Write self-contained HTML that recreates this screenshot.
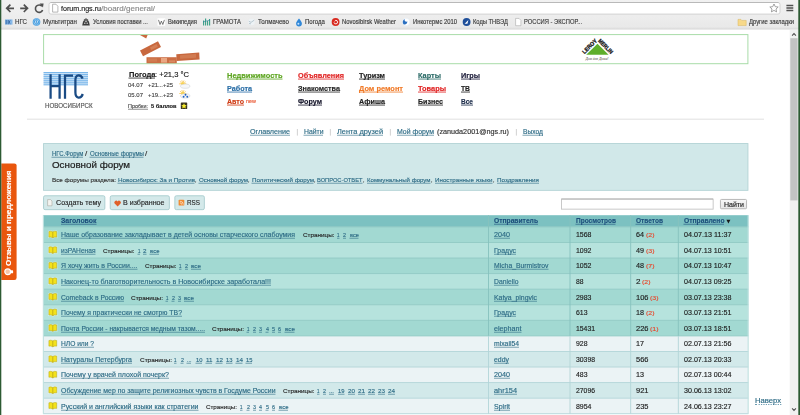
<!DOCTYPE html>
<html><head><meta charset="utf-8"><title>Основной форум</title><style>
html,body{margin:0;padding:0;}
body{width:800px;height:415px;overflow:hidden;background:#fff;position:relative;font-family:'Liberation Sans',sans-serif;}
.t{position:absolute;white-space:nowrap;line-height:1;transform-origin:0 0;font-family:'Liberation Sans',sans-serif;-webkit-text-stroke:0.022em currentColor;}
#bg{position:absolute;left:0;top:0;}
#tx{position:absolute;left:0;top:0;width:800px;height:415px;will-change:transform;}
</style></head><body>
<svg id="bg" width="800" height="415" viewBox="0 0 800 415">
<defs>
<linearGradient id="gtb" x1="0" y1="0" x2="0" y2="1"><stop offset="0" stop-color="#f1f1f1"/><stop offset="0.45" stop-color="#eeeeee"/><stop offset="0.9" stop-color="#e9e9e9"/><stop offset="0.96" stop-color="#dcdcdc"/><stop offset="1" stop-color="#f2f2f2"/></linearGradient>
<linearGradient id="gbtn" x1="0" y1="0" x2="0" y2="1"><stop offset="0" stop-color="#f8f8f8"/><stop offset="1" stop-color="#e5e5e5"/></linearGradient>
<pattern id="stripes" x="0" y="72" width="10" height="1.95" patternUnits="userSpaceOnUse"><rect width="10" height="1.95" fill="#d3e7f8"/><rect width="10" height="1.05" fill="#79b6ea"/></pattern>
</defs>
<rect x="0.00" y="0.00" width="800.00" height="30.00" fill="url(#gtb)" rx="0" />
<rect x="49.00" y="2.50" width="731.00" height="11.60" fill="#fff" stroke="#d2d2d2" stroke-width="1" rx="2" />
<path d="M50.5 2.5H778.5" stroke="#b9b9b9" stroke-width="1"/>
<g fill="none" stroke="#505050" stroke-width="1.7" stroke-linecap="butt" stroke-linejoin="miter">
<path d="M14 8.3H7M10.4 4.6L6.7 8.3L10.4 12"/>
<path d="M20.2 8.3H27.2M23.8 4.6L27.5 8.3L23.8 12"/>
<path d="M41.9 6.2A3.7 3.7 0 1 0 42.6 10" stroke-width="1.6"/>
</g>
<path d="M39.6 3.4L43.6 3.6L43 7.6Z" fill="#505050"/>
<path d="M52.6 4.2h3.3l2 2v5.9h-5.3z" fill="#fff" stroke="#9a9a9a" stroke-width="0.7"/>
<path d="M774 4l1.3 2.7 2.9.3-2.2 2 .6 2.9-2.6-1.5-2.6 1.5.6-2.9-2.2-2 2.9-.3z" fill="#fff" stroke="#8c8c8c" stroke-width="0.8"/>
<g stroke="#505050" stroke-width="1.4"><path d="M786.4 5.5h6.9M786.4 8h6.9M786.4 10.5h6.9"/></g>
<rect x="5" y="19.4" width="7.5" height="5.2" fill="#86b8e8"/><path d="M6.2 20v4.2M8.2 20v4.2M10.4 20.4c-1.4 0-1.4 3.4 0 3.4" stroke="#2a5a98" stroke-width="0.8" fill="none"/>
<circle cx="36.5" cy="22" r="3.8" fill="#3a96dc"/><circle cx="36.5" cy="22" r="2.9" fill="none" stroke="#bfe0f8" stroke-width="0.5"/><path d="M34.9 23.7l1.2-3.5M36.8 23.7l1.2-3.5" stroke="#fff" stroke-width="0.7"/>
<path d="M82.2 25.4l.8-3.6 1.6-2.6 1.4-.9 1.4.9 1.6 2.6.8 3.6z" fill="#3c3c3c"/><circle cx="86" cy="20.4" r="1.5" fill="#6e6e6e"/><circle cx="84.8" cy="23.2" r=".7" fill="#ddd"/><circle cx="87.2" cy="23.2" r=".7" fill="#ddd"/><circle cx="86" cy="21.6" r=".6" fill="#eee"/>
<rect x="157.5" y="18.3" width="7.8" height="7.4" fill="#fff"/><path d="M158.5 19.9l1.5 4.6 1.4-3.4 1.4 3.4 1.6-4.6" stroke="#444" stroke-width="0.7" fill="none"/>
<path d="M203.6 25.5v-5M205.6 25.5v-7M207.6 25.5v-4.5M209.6 25.5v-6.5" stroke="#3aa085" stroke-width="1.1"/><path d="M203 22l7-2" stroke="#2a7a98" stroke-width="0.6"/>
<circle cx="251.5" cy="22" r="3.3" fill="#edf2f5"/><path d="M248.8 21.2l2.2 1.2 3.2-2.2M249 23.5l2 .3" stroke="#a2b4c0" stroke-width="0.7" fill="none"/>
<path d="M299 18.4c1.9 2.4 2.9 3.6 2.9 5.1a2.9 2.9 0 0 1-5.8 0c0-1.5 1-2.7 2.9-5.1z" fill="#3188d8"/><circle cx="298.4" cy="23.8" r="1" fill="#c4e2ff"/>
<circle cx="335.6" cy="22" r="3.9" fill="#d82a20"/><path d="M334 22.4a1.8 1.8 0 1 0 1.8-2.1l-1.2 1" stroke="#fff" stroke-width="0.9" fill="none"/>
<circle cx="406" cy="22" r="3.8" fill="#fff" stroke="#dfe8f2" stroke-width="0.5"/><path d="M403.8 24.4a3.2 3.2 0 0 1 1-5.4c-.8 1.6.2 2.9 2.6 2.6a3.2 3.2 0 0 1-3.6 2.8z" fill="#2a6fc0"/>
<circle cx="466.6" cy="22" r="3.9" fill="#1f4f9a"/><path d="M464.6 23.8l3.8-3.8-1 3.8z" fill="#fff"/>
<path d="M515.6 18.4h3.4l1.9 1.9v5.4h-5.3z" fill="#fff" stroke="#aaa" stroke-width="0.6"/>
<path d="M738 19.4h2.9l.8 1h4.5v5.2h-8.2z" fill="#f7d98a" stroke="#d9b45a" stroke-width="0.5"/>
<rect x="789.70" y="30.00" width="8.50" height="385.00" fill="#f1f1f1" rx="0" />
<rect x="790.30" y="38.20" width="7.30" height="162.20" fill="#c3c3c3" rx="0" />
<path d="M792.1 35.6L794 33.6L795.9 35.6" stroke="#505050" stroke-width="1.1" fill="none"/><path d="M792.1 408.4L794 410.4L795.9 408.4" stroke="#505050" stroke-width="1.1" fill="none"/>
<rect x="43.60" y="34.60" width="704.30" height="29.10" fill="#fff" stroke="#a8dca8" stroke-width="1" rx="0" />
<path d="M140 35h7.6l-1.4 3.6z" fill="#c96a3e"/>
<path d="M140 50.4L158 41.2L161 47L143 56.2z" fill="#c8683e"/><path d="M150 47.4l6.5-3.3 1.4 2.7-6.5 3.3z" fill="#d9895f" opacity=".7"/>
<path d="M146.5 57.2h30.3v6h-30.3z" fill="#cb6e44"/>
<rect x="161" y="58" width="6" height="4.6" fill="#eaa782"/><rect x="169" y="60.4" width="6" height="2" fill="#dd9068" opacity=".8"/><rect x="148" y="58.4" width="9" height="3.4" fill="#d88a5e" opacity=".5"/>
<path d="M176.3 54.2L199.2 52.6L199.6 59.4L176.7 61z" fill="#c8683e"/><path d="M180 55.2l16-1.1.2 3.6-16 1.1z" fill="#d98b61" opacity=".55"/>
<path d="M597.5 43.7L608.6 54.8H586.2z" fill="#5fae2b"/>
<g font-family="'Liberation Sans',sans-serif" font-weight="bold" font-size="5.7" fill="#141414" stroke="#141414" stroke-width="0.3">
<text transform="translate(584.4 54.2) rotate(-45)" textLength="18.4" lengthAdjust="spacingAndGlyphs">LEROY</text>
<text transform="translate(597.7 41.2) rotate(45)" textLength="18.4" lengthAdjust="spacingAndGlyphs">MERLIN</text></g>
<text x="585.5" y="59.6" font-family="'Liberation Serif',serif" font-style="italic" font-size="4.6" fill="#4a3a34" textLength="23" lengthAdjust="spacingAndGlyphs">Дом для Дома!</text>
<rect x="43.50" y="72.00" width="44.50" height="13.60" fill="url(#stripes)" rx="0" />
<g stroke="#1a4b84" stroke-width="2.25" fill="none">
<path d="M50.6 74.3V98.8M59.6 74.3V98.8M50.6 86H59.6" />
<path d="M65 98.8V75.5H73"/>
<path d="M82.6 78.6C81 74 75.4 74 75.4 80V92.6C75.4 99 81 99 82.8 94"/>
</g>
<path d="M180.90 83.80L179.30 83.80M181.34 82.58L180.11 81.56M182.31 81.96L181.89 80.41M183.45 82.01L183.99 80.51M184.36 82.72L185.67 81.80M184.70 83.80L186.30 83.80" stroke="#f7c55a" stroke-width="0.9" fill="none"/><circle cx="182.8" cy="83.8" r="1.9" fill="#f9d24e"/>
<ellipse cx="185.2" cy="86.2" rx="4.7" ry="2.1" fill="#f6f7f9" stroke="#c4c8cc" stroke-width="0.5"/>
<path d="M180.90 93.50L179.30 93.50M181.34 92.28L180.11 91.26M182.31 91.66L181.89 90.11M183.45 91.71L183.99 90.21M184.36 92.42L185.67 91.50M184.70 93.50L186.30 93.50" stroke="#f7c55a" stroke-width="0.9" fill="none"/><circle cx="182.8" cy="93.5" r="1.9" fill="#f9d24e"/>
<ellipse cx="185.2" cy="95.9" rx="4.7" ry="2.2" fill="#f6f7f9" stroke="#c4c8cc" stroke-width="0.5"/>
<circle cx="183.6" cy="96.8" r="0.95" fill="#1f5fc0"/><circle cx="185.5" cy="94.8" r="0.95" fill="#1f5fc0"/><circle cx="187.3" cy="96.8" r="0.95" fill="#1f5fc0"/>
<rect x="180.8" y="102.4" width="6.4" height="6.7" rx="0.7" fill="#3a3422"/><path d="M184 103.2l.9 1.7 1.8.3-1.3 1.3.4 1.9-1.8-.9-1.8.9.4-1.9-1.3-1.3 1.8-.3z" fill="#f6ec2e"/>
<rect x="27.00" y="118.70" width="737.00" height="0.90" fill="#dcdcdc" rx="0" />
<rect x="296.90" y="129.00" width="0.80" height="6.60" fill="#c6c6c6" rx="0" />
<rect x="329.90" y="129.00" width="0.80" height="6.60" fill="#c6c6c6" rx="0" />
<rect x="389.90" y="129.00" width="0.80" height="6.60" fill="#c6c6c6" rx="0" />
<rect x="515.90" y="129.00" width="0.80" height="6.60" fill="#c6c6c6" rx="0" />
<rect x="43.55" y="143.55" width="704.40" height="46.80" fill="#d1e8e9" stroke="#b3d3d5" stroke-width="0.9" rx="0" />
<rect x="43.55" y="195.75" width="61.30" height="13.90" fill="#d4e9ea" stroke="#a7ccce" stroke-width="0.9" rx="1.5" />
<rect x="110.25" y="195.75" width="59.10" height="13.90" fill="#d4e9ea" stroke="#a7ccce" stroke-width="0.9" rx="1.5" />
<rect x="174.85" y="195.75" width="29.50" height="13.90" fill="#d4e9ea" stroke="#a7ccce" stroke-width="0.9" rx="1.5" />
<path d="M47.6 199.6h3l1.4 1.4v4.8h-4.4z" fill="#f4f4f0" stroke="#a8a8a0" stroke-width="0.6"/>
<path d="M117.6 206.4l-3-3a1.75 1.75 0 0 1 3-2a1.75 1.75 0 0 1 3 2z" fill="#e0602a"/>
<rect x="178.6" y="199.7" width="5.7" height="5.9" rx="0.9" fill="#f08a30"/><path d="M179.9 202.8a1.8 1.8 0 0 1 1.8 1.8M179.9 201.2a3.4 3.4 0 0 1 3.4 3.4" stroke="#fff" stroke-width="0.6" fill="none"/>
<rect x="561.45" y="199.05" width="151.70" height="10.10" fill="#fff" stroke="#c4c4c4" stroke-width="0.9" rx="0" />
<path d="M561.5 199H713" stroke="#a8a8a8" stroke-width="0.8"/>
<rect x="720.45" y="199.45" width="26.10" height="9.30" fill="url(#gbtn)" stroke="#b0b0b0" stroke-width="0.9" rx="1" />
<rect x="43.10" y="215.20" width="705.30" height="11.70" fill="#7cc1c1" rx="0" />
<rect x="43.10" y="226.90" width="705.30" height="15.62" fill="#a2d9d2" rx="0" />
<rect x="43.10" y="242.47" width="705.30" height="15.62" fill="#b6e3dd" rx="0" />
<rect x="43.10" y="258.04" width="705.30" height="15.62" fill="#a2d9d2" rx="0" />
<rect x="43.10" y="273.61" width="705.30" height="15.62" fill="#b6e3dd" rx="0" />
<rect x="43.10" y="289.18" width="705.30" height="15.62" fill="#a2d9d2" rx="0" />
<rect x="43.10" y="304.75" width="705.30" height="15.62" fill="#b6e3dd" rx="0" />
<rect x="43.10" y="320.32" width="705.30" height="15.62" fill="#a2d9d2" rx="0" />
<rect x="43.10" y="335.89" width="705.30" height="15.62" fill="#ebf3f5" rx="0" />
<rect x="43.10" y="351.46" width="705.30" height="15.62" fill="#d2e9ea" rx="0" />
<rect x="43.10" y="367.03" width="705.30" height="15.62" fill="#ebf3f5" rx="0" />
<rect x="43.10" y="382.60" width="705.30" height="15.62" fill="#d2e9ea" rx="0" />
<rect x="43.10" y="398.17" width="705.30" height="15.62" fill="#ebf3f5" rx="0" />
<rect x="43.10" y="226.45" width="705.30" height="0.90" fill="#8fc9c4" rx="0" />
<rect x="43.10" y="242.02" width="705.30" height="0.90" fill="#8fc9c4" rx="0" />
<rect x="43.10" y="257.59" width="705.30" height="0.90" fill="#8fc9c4" rx="0" />
<rect x="43.10" y="273.16" width="705.30" height="0.90" fill="#8fc9c4" rx="0" />
<rect x="43.10" y="288.73" width="705.30" height="0.90" fill="#8fc9c4" rx="0" />
<rect x="43.10" y="304.30" width="705.30" height="0.90" fill="#8fc9c4" rx="0" />
<rect x="43.10" y="319.87" width="705.30" height="0.90" fill="#8fc9c4" rx="0" />
<rect x="43.10" y="335.44" width="705.30" height="0.90" fill="#8fc9c4" rx="0" />
<rect x="43.10" y="351.01" width="705.30" height="0.90" fill="#b3d5d8" rx="0" />
<rect x="43.10" y="366.58" width="705.30" height="0.90" fill="#b3d5d8" rx="0" />
<rect x="43.10" y="382.15" width="705.30" height="0.90" fill="#b3d5d8" rx="0" />
<rect x="43.10" y="397.72" width="705.30" height="0.90" fill="#b3d5d8" rx="0" />
<rect x="43.10" y="413.29" width="705.30" height="0.90" fill="#b3d5d8" rx="0" />
<rect x="488.05" y="215.20" width="0.90" height="120.69" fill="#86c2be" rx="0" />
<rect x="488.05" y="335.89" width="0.90" height="77.85" fill="#b3d5d8" rx="0" />
<rect x="569.55" y="215.20" width="0.90" height="120.69" fill="#86c2be" rx="0" />
<rect x="569.55" y="335.89" width="0.90" height="77.85" fill="#b3d5d8" rx="0" />
<rect x="630.25" y="215.20" width="0.90" height="120.69" fill="#86c2be" rx="0" />
<rect x="630.25" y="335.89" width="0.90" height="77.85" fill="#b3d5d8" rx="0" />
<rect x="677.85" y="215.20" width="0.90" height="120.69" fill="#86c2be" rx="0" />
<rect x="677.85" y="335.89" width="0.90" height="77.85" fill="#b3d5d8" rx="0" />
<rect x="42.80" y="215.20" width="1.10" height="198.54" fill="#c0e1e0" rx="0" />
<rect x="747.60" y="215.20" width="1.10" height="198.54" fill="#c0e1e0" rx="0" />
<path d="M48.9 231.55q2-.9 3.9 .3q1.9-1.2 3.9-.3v5.6q-2-.6-3.9 .7q-1.9-1.3-3.9-.7z" fill="none" stroke="#e6fbf4" stroke-width="1.7" opacity=".55"/><path d="M48.9 231.55q2-.9 3.9 .3q1.9-1.2 3.9-.3v5.6q-2-.6-3.9 .7q-1.9-1.3-3.9-.7z" fill="#f3e21c" stroke="#b9a216" stroke-width="0.5"/><path d="M52.8 231.95v5.9" stroke="#a08c12" stroke-width="0.55"/>
<path d="M48.9 247.12q2-.9 3.9 .3q1.9-1.2 3.9-.3v5.6q-2-.6-3.9 .7q-1.9-1.3-3.9-.7z" fill="none" stroke="#e6fbf4" stroke-width="1.7" opacity=".55"/><path d="M48.9 247.12q2-.9 3.9 .3q1.9-1.2 3.9-.3v5.6q-2-.6-3.9 .7q-1.9-1.3-3.9-.7z" fill="#f3e21c" stroke="#b9a216" stroke-width="0.5"/><path d="M52.8 247.52v5.9" stroke="#a08c12" stroke-width="0.55"/>
<path d="M48.9 262.69q2-.9 3.9 .3q1.9-1.2 3.9-.3v5.6q-2-.6-3.9 .7q-1.9-1.3-3.9-.7z" fill="none" stroke="#e6fbf4" stroke-width="1.7" opacity=".55"/><path d="M48.9 262.69q2-.9 3.9 .3q1.9-1.2 3.9-.3v5.6q-2-.6-3.9 .7q-1.9-1.3-3.9-.7z" fill="#f3e21c" stroke="#b9a216" stroke-width="0.5"/><path d="M52.8 263.09v5.9" stroke="#a08c12" stroke-width="0.55"/>
<path d="M48.9 278.26q2-.9 3.9 .3q1.9-1.2 3.9-.3v5.6q-2-.6-3.9 .7q-1.9-1.3-3.9-.7z" fill="none" stroke="#e6fbf4" stroke-width="1.7" opacity=".55"/><path d="M48.9 278.26q2-.9 3.9 .3q1.9-1.2 3.9-.3v5.6q-2-.6-3.9 .7q-1.9-1.3-3.9-.7z" fill="#f3e21c" stroke="#b9a216" stroke-width="0.5"/><path d="M52.8 278.66v5.9" stroke="#a08c12" stroke-width="0.55"/>
<path d="M48.9 293.83q2-.9 3.9 .3q1.9-1.2 3.9-.3v5.6q-2-.6-3.9 .7q-1.9-1.3-3.9-.7z" fill="none" stroke="#e6fbf4" stroke-width="1.7" opacity=".55"/><path d="M48.9 293.83q2-.9 3.9 .3q1.9-1.2 3.9-.3v5.6q-2-.6-3.9 .7q-1.9-1.3-3.9-.7z" fill="#f3e21c" stroke="#b9a216" stroke-width="0.5"/><path d="M52.8 294.23v5.9" stroke="#a08c12" stroke-width="0.55"/>
<path d="M48.9 309.40q2-.9 3.9 .3q1.9-1.2 3.9-.3v5.6q-2-.6-3.9 .7q-1.9-1.3-3.9-.7z" fill="none" stroke="#e6fbf4" stroke-width="1.7" opacity=".55"/><path d="M48.9 309.40q2-.9 3.9 .3q1.9-1.2 3.9-.3v5.6q-2-.6-3.9 .7q-1.9-1.3-3.9-.7z" fill="#f3e21c" stroke="#b9a216" stroke-width="0.5"/><path d="M52.8 309.80v5.9" stroke="#a08c12" stroke-width="0.55"/>
<path d="M48.9 324.97q2-.9 3.9 .3q1.9-1.2 3.9-.3v5.6q-2-.6-3.9 .7q-1.9-1.3-3.9-.7z" fill="none" stroke="#e6fbf4" stroke-width="1.7" opacity=".55"/><path d="M48.9 324.97q2-.9 3.9 .3q1.9-1.2 3.9-.3v5.6q-2-.6-3.9 .7q-1.9-1.3-3.9-.7z" fill="#f3e21c" stroke="#b9a216" stroke-width="0.5"/><path d="M52.8 325.37v5.9" stroke="#a08c12" stroke-width="0.55"/>
<path d="M48.9 340.54q2-.9 3.9 .3q1.9-1.2 3.9-.3v5.6q-2-.6-3.9 .7q-1.9-1.3-3.9-.7z" fill="none" stroke="#e6fbf4" stroke-width="1.7" opacity=".55"/><path d="M48.9 340.54q2-.9 3.9 .3q1.9-1.2 3.9-.3v5.6q-2-.6-3.9 .7q-1.9-1.3-3.9-.7z" fill="#f3e21c" stroke="#b9a216" stroke-width="0.5"/><path d="M52.8 340.94v5.9" stroke="#a08c12" stroke-width="0.55"/>
<path d="M48.9 356.11q2-.9 3.9 .3q1.9-1.2 3.9-.3v5.6q-2-.6-3.9 .7q-1.9-1.3-3.9-.7z" fill="none" stroke="#e6fbf4" stroke-width="1.7" opacity=".55"/><path d="M48.9 356.11q2-.9 3.9 .3q1.9-1.2 3.9-.3v5.6q-2-.6-3.9 .7q-1.9-1.3-3.9-.7z" fill="#f3e21c" stroke="#b9a216" stroke-width="0.5"/><path d="M52.8 356.51v5.9" stroke="#a08c12" stroke-width="0.55"/>
<path d="M48.9 371.68q2-.9 3.9 .3q1.9-1.2 3.9-.3v5.6q-2-.6-3.9 .7q-1.9-1.3-3.9-.7z" fill="none" stroke="#e6fbf4" stroke-width="1.7" opacity=".55"/><path d="M48.9 371.68q2-.9 3.9 .3q1.9-1.2 3.9-.3v5.6q-2-.6-3.9 .7q-1.9-1.3-3.9-.7z" fill="#f3e21c" stroke="#b9a216" stroke-width="0.5"/><path d="M52.8 372.08v5.9" stroke="#a08c12" stroke-width="0.55"/>
<path d="M48.9 387.25q2-.9 3.9 .3q1.9-1.2 3.9-.3v5.6q-2-.6-3.9 .7q-1.9-1.3-3.9-.7z" fill="none" stroke="#e6fbf4" stroke-width="1.7" opacity=".55"/><path d="M48.9 387.25q2-.9 3.9 .3q1.9-1.2 3.9-.3v5.6q-2-.6-3.9 .7q-1.9-1.3-3.9-.7z" fill="#f3e21c" stroke="#b9a216" stroke-width="0.5"/><path d="M52.8 387.65v5.9" stroke="#a08c12" stroke-width="0.55"/>
<path d="M48.9 402.82q2-.9 3.9 .3q1.9-1.2 3.9-.3v5.6q-2-.6-3.9 .7q-1.9-1.3-3.9-.7z" fill="none" stroke="#e6fbf4" stroke-width="1.7" opacity=".55"/><path d="M48.9 402.82q2-.9 3.9 .3q1.9-1.2 3.9-.3v5.6q-2-.6-3.9 .7q-1.9-1.3-3.9-.7z" fill="#f3e21c" stroke="#b9a216" stroke-width="0.5"/><path d="M52.8 403.22v5.9" stroke="#a08c12" stroke-width="0.55"/>
<path d="M726.4 219.8h4l-2 3.6z" fill="#1a1a1a"/>
<rect x="128.50" y="77.60" width="26.50" height="0.90" fill="#222" rx="0" opacity="0.9"/>
<rect x="128.00" y="108.80" width="20.00" height="0.75" fill="#444" rx="0" opacity="0.8"/>
<rect x="227.00" y="78.60" width="55.50" height="0.90" fill="#5ba41e" rx="0" opacity="0.9"/>
<rect x="227.00" y="91.60" width="25.00" height="0.90" fill="#2a6ea6" rx="0" opacity="0.9"/>
<rect x="227.00" y="104.60" width="17.00" height="0.90" fill="#cf3a12" rx="0" opacity="0.9"/>
<rect x="298.00" y="78.60" width="46.00" height="0.90" fill="#e02222" rx="0" opacity="0.9"/>
<rect x="298.00" y="91.60" width="42.00" height="0.90" fill="#2a2a2a" rx="0" opacity="0.9"/>
<rect x="298.00" y="104.60" width="24.00" height="0.90" fill="#15152a" rx="0" opacity="0.9"/>
<rect x="359.00" y="78.60" width="26.00" height="0.90" fill="#222" rx="0" opacity="0.9"/>
<rect x="359.00" y="91.60" width="44.00" height="0.90" fill="#f07a28" rx="0" opacity="0.9"/>
<rect x="359.00" y="104.60" width="26.00" height="0.90" fill="#222" rx="0" opacity="0.9"/>
<rect x="418.00" y="78.60" width="23.00" height="0.90" fill="#2a6a66" rx="0" opacity="0.9"/>
<rect x="418.00" y="91.60" width="28.00" height="0.90" fill="#e02222" rx="0" opacity="0.9"/>
<rect x="418.00" y="104.60" width="25.00" height="0.90" fill="#222" rx="0" opacity="0.9"/>
<rect x="461.00" y="78.60" width="19.00" height="0.90" fill="#1a1a38" rx="0" opacity="0.9"/>
<rect x="461.00" y="91.60" width="9.00" height="0.90" fill="#222" rx="0" opacity="0.9"/>
<rect x="461.00" y="104.60" width="12.00" height="0.90" fill="#1a2a48" rx="0" opacity="0.9"/>
<rect x="250.00" y="134.80" width="40.00" height="0.75" fill="#2d6b85" rx="0" opacity="0.8"/>
<rect x="303.50" y="134.80" width="19.50" height="0.75" fill="#2d6b85" rx="0" opacity="0.8"/>
<rect x="337.00" y="134.80" width="46.00" height="0.75" fill="#2d6b85" rx="0" opacity="0.8"/>
<rect x="397.00" y="134.80" width="37.00" height="0.75" fill="#2d6b85" rx="0" opacity="0.8"/>
<rect x="522.50" y="134.80" width="20.00" height="0.75" fill="#2d6b85" rx="0" opacity="0.8"/>
<rect x="51.50" y="156.80" width="31.50" height="0.75" fill="#2d6b85" rx="0" opacity="0.8"/>
<rect x="89.50" y="156.80" width="54.00" height="0.75" fill="#2d6b85" rx="0" opacity="0.8"/>
<rect x="117.50" y="182.80" width="77.00" height="0.75" fill="#2d6b85" rx="0" opacity="0.8"/>
<rect x="198.50" y="182.80" width="49.00" height="0.75" fill="#2d6b85" rx="0" opacity="0.8"/>
<rect x="251.50" y="182.80" width="62.00" height="0.75" fill="#2d6b85" rx="0" opacity="0.8"/>
<rect x="317.00" y="182.80" width="45.50" height="0.75" fill="#2d6b85" rx="0" opacity="0.8"/>
<rect x="367.00" y="182.80" width="63.50" height="0.75" fill="#2d6b85" rx="0" opacity="0.8"/>
<rect x="435.00" y="182.80" width="57.50" height="0.75" fill="#2d6b85" rx="0" opacity="0.8"/>
<rect x="497.00" y="182.80" width="42.00" height="0.75" fill="#2d6b85" rx="0" opacity="0.8"/>
<rect x="61.00" y="223.80" width="35.50" height="0.75" fill="#1d4f7c" rx="0" opacity="0.8"/>
<rect x="494.00" y="223.80" width="44.00" height="0.75" fill="#1d4f7c" rx="0" opacity="0.8"/>
<rect x="575.50" y="223.80" width="40.00" height="0.75" fill="#1d4f7c" rx="0" opacity="0.8"/>
<rect x="635.50" y="223.80" width="27.00" height="0.75" fill="#1d4f7c" rx="0" opacity="0.8"/>
<rect x="683.50" y="223.80" width="40.50" height="0.75" fill="#1d4f7c" rx="0" opacity="0.8"/>
<rect x="61.00" y="237.80" width="234.00" height="0.75" fill="#2d6b85" rx="0" opacity="0.8"/>
<rect x="337.00" y="237.80" width="2.50" height="0.75" fill="#2d6b85" rx="0" opacity="0.8"/>
<rect x="343.00" y="237.80" width="3.00" height="0.75" fill="#2d6b85" rx="0" opacity="0.8"/>
<rect x="349.50" y="237.80" width="9.00" height="0.75" fill="#2d6b85" rx="0" opacity="0.8"/>
<rect x="494.00" y="237.80" width="16.00" height="0.75" fill="#2d6b85" rx="0" opacity="0.8"/>
<rect x="61.00" y="253.80" width="34.50" height="0.75" fill="#2d6b85" rx="0" opacity="0.8"/>
<rect x="137.50" y="253.80" width="2.50" height="0.75" fill="#2d6b85" rx="0" opacity="0.8"/>
<rect x="143.00" y="253.80" width="3.50" height="0.75" fill="#2d6b85" rx="0" opacity="0.8"/>
<rect x="149.50" y="253.80" width="9.50" height="0.75" fill="#2d6b85" rx="0" opacity="0.8"/>
<rect x="494.00" y="253.80" width="22.00" height="0.75" fill="#2d6b85" rx="0" opacity="0.8"/>
<rect x="61.00" y="268.80" width="76.50" height="0.75" fill="#2d6b85" rx="0" opacity="0.8"/>
<rect x="179.00" y="268.80" width="2.50" height="0.75" fill="#2d6b85" rx="0" opacity="0.8"/>
<rect x="185.00" y="268.80" width="3.00" height="0.75" fill="#2d6b85" rx="0" opacity="0.8"/>
<rect x="191.00" y="268.80" width="10.00" height="0.75" fill="#2d6b85" rx="0" opacity="0.8"/>
<rect x="494.00" y="268.80" width="54.50" height="0.75" fill="#2d6b85" rx="0" opacity="0.8"/>
<rect x="61.00" y="284.80" width="210.00" height="0.75" fill="#2d6b85" rx="0" opacity="0.8"/>
<rect x="494.00" y="284.80" width="24.50" height="0.75" fill="#2d6b85" rx="0" opacity="0.8"/>
<rect x="61.00" y="300.80" width="63.00" height="0.75" fill="#2d6b85" rx="0" opacity="0.8"/>
<rect x="165.50" y="300.80" width="2.50" height="0.75" fill="#2d6b85" rx="0" opacity="0.8"/>
<rect x="171.50" y="300.80" width="3.00" height="0.75" fill="#2d6b85" rx="0" opacity="0.8"/>
<rect x="178.00" y="300.80" width="3.00" height="0.75" fill="#2d6b85" rx="0" opacity="0.8"/>
<rect x="184.00" y="300.80" width="10.00" height="0.75" fill="#2d6b85" rx="0" opacity="0.8"/>
<rect x="494.00" y="300.80" width="43.00" height="0.75" fill="#2d6b85" rx="0" opacity="0.8"/>
<rect x="61.00" y="315.80" width="121.00" height="0.75" fill="#2d6b85" rx="0" opacity="0.8"/>
<rect x="494.00" y="315.80" width="22.00" height="0.75" fill="#2d6b85" rx="0" opacity="0.8"/>
<rect x="61.00" y="331.80" width="144.00" height="0.75" fill="#2d6b85" rx="0" opacity="0.8"/>
<rect x="246.50" y="331.80" width="2.50" height="0.75" fill="#2d6b85" rx="0" opacity="0.8"/>
<rect x="253.00" y="331.80" width="3.00" height="0.75" fill="#2d6b85" rx="0" opacity="0.8"/>
<rect x="259.00" y="331.80" width="3.00" height="0.75" fill="#2d6b85" rx="0" opacity="0.8"/>
<rect x="265.50" y="331.80" width="3.00" height="0.75" fill="#2d6b85" rx="0" opacity="0.8"/>
<rect x="272.00" y="331.80" width="3.00" height="0.75" fill="#2d6b85" rx="0" opacity="0.8"/>
<rect x="278.00" y="331.80" width="3.00" height="0.75" fill="#2d6b85" rx="0" opacity="0.8"/>
<rect x="284.50" y="331.80" width="10.00" height="0.75" fill="#2d6b85" rx="0" opacity="0.8"/>
<rect x="494.00" y="331.80" width="27.50" height="0.75" fill="#2d6b85" rx="0" opacity="0.8"/>
<rect x="61.00" y="346.80" width="33.00" height="0.75" fill="#2d6b85" rx="0" opacity="0.8"/>
<rect x="494.00" y="346.80" width="25.00" height="0.75" fill="#2d6b85" rx="0" opacity="0.8"/>
<rect x="61.00" y="362.80" width="71.00" height="0.75" fill="#2d6b85" rx="0" opacity="0.8"/>
<rect x="174.00" y="362.80" width="2.50" height="0.75" fill="#2d6b85" rx="0" opacity="0.8"/>
<rect x="180.50" y="362.80" width="3.00" height="0.75" fill="#2d6b85" rx="0" opacity="0.8"/>
<rect x="186.50" y="362.80" width="4.50" height="0.75" fill="#2d6b85" rx="0" opacity="0.8"/>
<rect x="195.50" y="362.80" width="6.50" height="0.75" fill="#2d6b85" rx="0" opacity="0.8"/>
<rect x="205.50" y="362.80" width="6.50" height="0.75" fill="#2d6b85" rx="0" opacity="0.8"/>
<rect x="215.50" y="362.80" width="7.00" height="0.75" fill="#2d6b85" rx="0" opacity="0.8"/>
<rect x="226.00" y="362.80" width="6.50" height="0.75" fill="#2d6b85" rx="0" opacity="0.8"/>
<rect x="235.50" y="362.80" width="7.00" height="0.75" fill="#2d6b85" rx="0" opacity="0.8"/>
<rect x="245.50" y="362.80" width="6.50" height="0.75" fill="#2d6b85" rx="0" opacity="0.8"/>
<rect x="494.00" y="362.80" width="15.00" height="0.75" fill="#2d6b85" rx="0" opacity="0.8"/>
<rect x="61.00" y="377.80" width="108.00" height="0.75" fill="#2d6b85" rx="0" opacity="0.8"/>
<rect x="494.00" y="377.80" width="16.00" height="0.75" fill="#2d6b85" rx="0" opacity="0.8"/>
<rect x="61.00" y="393.80" width="214.50" height="0.75" fill="#2d6b85" rx="0" opacity="0.8"/>
<rect x="317.00" y="393.80" width="2.50" height="0.75" fill="#2d6b85" rx="0" opacity="0.8"/>
<rect x="323.00" y="393.80" width="3.00" height="0.75" fill="#2d6b85" rx="0" opacity="0.8"/>
<rect x="329.00" y="393.80" width="5.00" height="0.75" fill="#2d6b85" rx="0" opacity="0.8"/>
<rect x="338.00" y="393.80" width="6.50" height="0.75" fill="#2d6b85" rx="0" opacity="0.8"/>
<rect x="348.00" y="393.80" width="7.00" height="0.75" fill="#2d6b85" rx="0" opacity="0.8"/>
<rect x="358.00" y="393.80" width="7.00" height="0.75" fill="#2d6b85" rx="0" opacity="0.8"/>
<rect x="368.00" y="393.80" width="7.00" height="0.75" fill="#2d6b85" rx="0" opacity="0.8"/>
<rect x="378.00" y="393.80" width="7.00" height="0.75" fill="#2d6b85" rx="0" opacity="0.8"/>
<rect x="388.00" y="393.80" width="7.00" height="0.75" fill="#2d6b85" rx="0" opacity="0.8"/>
<rect x="494.00" y="393.80" width="23.00" height="0.75" fill="#2d6b85" rx="0" opacity="0.8"/>
<rect x="61.00" y="409.80" width="137.50" height="0.75" fill="#2d6b85" rx="0" opacity="0.8"/>
<rect x="240.00" y="409.80" width="2.50" height="0.75" fill="#2d6b85" rx="0" opacity="0.8"/>
<rect x="246.50" y="409.80" width="3.00" height="0.75" fill="#2d6b85" rx="0" opacity="0.8"/>
<rect x="253.00" y="409.80" width="3.00" height="0.75" fill="#2d6b85" rx="0" opacity="0.8"/>
<rect x="259.00" y="409.80" width="3.00" height="0.75" fill="#2d6b85" rx="0" opacity="0.8"/>
<rect x="265.50" y="409.80" width="3.00" height="0.75" fill="#2d6b85" rx="0" opacity="0.8"/>
<rect x="272.00" y="409.80" width="3.00" height="0.75" fill="#2d6b85" rx="0" opacity="0.8"/>
<rect x="278.50" y="409.80" width="9.50" height="0.75" fill="#2d6b85" rx="0" opacity="0.8"/>
<rect x="494.00" y="409.80" width="16.00" height="0.75" fill="#2d6b85" rx="0" opacity="0.8"/>
<path d="M1.3 163.4H14.4a2.2 2.2 0 0 1 2.2 2.2V277.8a2.2 2.2 0 0 1 -2.2 2.2H1.3z" fill="#e9560d"/>
<circle cx="7.7" cy="271.8" r="2.9" fill="#f7c4a6" stroke="#fff" stroke-width="1.2"/><rect x="10.8" y="270.3" width="2.3" height="3" rx="0.6" fill="#fff"/>
<rect x="0.00" y="0.00" width="1.30" height="415.00" fill="#2d5a33" rx="0" />
<rect x="798.30" y="0.00" width="1.70" height="415.00" fill="#2d5a33" rx="0" />
</svg>
<div id="tx">
<div class="t" style="left:5.6px;top:266px;font-size:7.1px;font-weight:bold;color:#fff;transform:rotate(-90deg) scaleX(1.128);">Отзывы и предложения</div>
<span class="t" style="left:61.00px;top:5.00px;font-size:7.4px;color:#222;transform:scaleX(0.9639);">forum.ngs.ru</span>
<span class="t" style="left:101.00px;top:5.00px;font-size:7.4px;color:#8a8a8a;transform:scaleX(1.0861);">/board/general/</span>
<span class="t" style="left:15.00px;top:19.00px;font-size:6.35px;color:#3a3a3a;transform:scaleX(0.9746);">НГС</span>
<span class="t" style="left:43.00px;top:19.00px;font-size:6.35px;color:#3a3a3a;transform:scaleX(0.9762);">Мультитран</span>
<span class="t" style="left:93.00px;top:19.00px;font-size:6.35px;color:#3a3a3a;transform:scaleX(0.9253);">Условия поставки ...</span>
<span class="t" style="left:168.00px;top:19.00px;font-size:6.35px;color:#3a3a3a;transform:scaleX(0.9174);">Википедия</span>
<span class="t" style="left:213.00px;top:19.00px;font-size:6.35px;color:#3a3a3a;transform:scaleX(0.9461);">ГРАМОТА</span>
<span class="t" style="left:258.00px;top:19.00px;font-size:6.35px;color:#3a3a3a;transform:scaleX(0.9721);">Толмачево</span>
<span class="t" style="left:305.00px;top:19.00px;font-size:6.35px;color:#3a3a3a;transform:scaleX(0.9574);">Погода</span>
<span class="t" style="left:342.00px;top:19.00px;font-size:6.35px;color:#3a3a3a;transform:scaleX(0.9243);">Novosibirsk Weather</span>
<span class="t" style="left:413.00px;top:19.00px;font-size:6.35px;color:#3a3a3a;transform:scaleX(0.9242);">Инкотермс 2010</span>
<span class="t" style="left:473.00px;top:19.00px;font-size:6.35px;color:#3a3a3a;transform:scaleX(0.9102);">Коды ТНВЭД</span>
<span class="t" style="left:524.00px;top:19.00px;font-size:6.35px;color:#3a3a3a;transform:scaleX(0.9127);">РОССИЯ - ЭКСПОР...</span>
<span class="t" style="left:749.00px;top:19.00px;font-size:6.35px;color:#3a3a3a;transform:scaleX(0.9257);">Другие закладки</span>
<span class="t" style="left:44.50px;top:103.00px;font-size:6.6px;color:#555;transform:scaleX(0.9368);">НОВОСИБИРСК</span>
<span class="t" style="left:128.50px;top:71.00px;font-size:7.4px;color:#222;transform:scaleX(1.0180);font-weight:bold;">Погода</span>
<span class="t" style="left:155.00px;top:71.00px;font-size:7.4px;color:#222;transform:scaleX(1.0254);">: +21,3 °C</span>
<span class="t" style="left:128.00px;top:83.00px;font-size:5.4px;color:#444;transform:scaleX(1.1111);">04.07</span>
<span class="t" style="left:147.50px;top:83.00px;font-size:5.4px;color:#444;transform:scaleX(1.0974);">+21...+25</span>
<span class="t" style="left:128.00px;top:93.00px;font-size:5.4px;color:#444;transform:scaleX(1.1111);">05.07</span>
<span class="t" style="left:147.50px;top:93.00px;font-size:5.4px;color:#444;transform:scaleX(1.0974);">+19...+23</span>
<span class="t" style="left:128.00px;top:104.00px;font-size:5.4px;color:#444;transform:scaleX(1.0087);">Пробки:</span>
<span class="t" style="left:150.50px;top:104.00px;font-size:5.4px;color:#111;transform:scaleX(1.0529);font-weight:bold;">5 баллов</span>
<span class="t" style="left:227.00px;top:72.00px;font-size:7.3px;color:#5ba41e;transform:scaleX(1.0207);font-weight:bold;">Недвижимость</span>
<span class="t" style="left:227.00px;top:85.00px;font-size:7.3px;color:#2a6ea6;transform:scaleX(0.9901);font-weight:bold;">Работа</span>
<span class="t" style="left:227.00px;top:98.00px;font-size:7.3px;color:#cf3a12;transform:scaleX(0.9663);font-weight:bold;">Авто</span>
<span class="t" style="left:298.00px;top:72.00px;font-size:7.3px;color:#e02222;transform:scaleX(1.0041);font-weight:bold;">Объявления</span>
<span class="t" style="left:298.00px;top:85.00px;font-size:7.3px;color:#2a2a2a;transform:scaleX(0.9919);font-weight:bold;">Знакомства</span>
<span class="t" style="left:298.00px;top:98.00px;font-size:7.3px;color:#15152a;transform:scaleX(0.9834);font-weight:bold;">Форум</span>
<span class="t" style="left:359.00px;top:72.00px;font-size:7.3px;color:#222;transform:scaleX(1.0024);font-weight:bold;">Туризм</span>
<span class="t" style="left:359.00px;top:85.00px;font-size:7.3px;color:#f07a28;transform:scaleX(1.0177);font-weight:bold;">Дом ремонт</span>
<span class="t" style="left:359.00px;top:98.00px;font-size:7.3px;color:#222;transform:scaleX(0.9893);font-weight:bold;">Афиша</span>
<span class="t" style="left:418.00px;top:72.00px;font-size:7.3px;color:#2a6a66;transform:scaleX(1.0096);font-weight:bold;">Карты</span>
<span class="t" style="left:418.00px;top:85.00px;font-size:7.3px;color:#e02222;transform:scaleX(1.0147);font-weight:bold;">Товары</span>
<span class="t" style="left:418.00px;top:98.00px;font-size:7.3px;color:#222;transform:scaleX(0.9691);font-weight:bold;">Бизнес</span>
<span class="t" style="left:461.00px;top:72.00px;font-size:7.3px;color:#1a1a38;transform:scaleX(1.0008);font-weight:bold;">Игры</span>
<span class="t" style="left:461.00px;top:85.00px;font-size:7.3px;color:#222;transform:scaleX(0.9246);font-weight:bold;">ТВ</span>
<span class="t" style="left:461.00px;top:98.00px;font-size:7.3px;color:#1a2a48;transform:scaleX(0.8961);font-weight:bold;">Все</span>
<span class="t" style="left:246.30px;top:99.00px;font-size:5.4px;color:#e8502a;transform:scaleX(1.0111);">new</span>
<span class="t" style="left:250.00px;top:129.00px;font-size:6.9px;color:#2d6b85;transform:scaleX(1.0411);">Оглавление</span>
<span class="t" style="left:303.50px;top:129.00px;font-size:6.9px;color:#2d6b85;transform:scaleX(0.9913);">Найти</span>
<span class="t" style="left:337.00px;top:129.00px;font-size:6.9px;color:#2d6b85;transform:scaleX(1.0705);">Лента друзей</span>
<span class="t" style="left:397.00px;top:129.00px;font-size:6.9px;color:#2d6b85;transform:scaleX(1.0059);">Мой форум</span>
<span class="t" style="left:437.00px;top:129.00px;font-size:6.9px;color:#333;transform:scaleX(1.0485);">(zanuda2001@ngs.ru)</span>
<span class="t" style="left:522.50px;top:129.00px;font-size:6.9px;color:#2d6b85;transform:scaleX(0.9697);">Выход</span>
<span class="t" style="left:51.50px;top:151.00px;font-size:6.3px;color:#2d6b85;transform:scaleX(0.9514);">НГС.Форум</span>
<span class="t" style="left:85.30px;top:151.00px;font-size:6.3px;color:#333;transform:scaleX(1.2571);">/</span>
<span class="t" style="left:89.50px;top:151.00px;font-size:6.3px;color:#2d6b85;transform:scaleX(0.9697);">Основные форумы</span>
<span class="t" style="left:145.30px;top:151.00px;font-size:6.3px;color:#333;transform:scaleX(1.2571);">/</span>
<span class="t" style="left:51.50px;top:160.00px;font-size:9.6px;color:#1e1e1e;transform:scaleX(1.0211);">Основной форум</span>
<span class="t" style="left:51.50px;top:177.00px;font-size:6.0px;color:#333;transform:scaleX(1.0497);">Все форумы раздела:</span>
<span class="t" style="left:117.50px;top:177.00px;font-size:6.0px;color:#2d6b85;transform:scaleX(1.0496);">Новосибирск: За и Против</span>
<span class="t" style="left:194.80px;top:177.00px;font-size:6.0px;color:#333;transform:scaleX(0.8972);">,</span>
<span class="t" style="left:198.50px;top:177.00px;font-size:6.0px;color:#2d6b85;transform:scaleX(1.0255);">Основной форум</span>
<span class="t" style="left:247.80px;top:177.00px;font-size:6.0px;color:#333;transform:scaleX(0.8972);">,</span>
<span class="t" style="left:251.50px;top:177.00px;font-size:6.0px;color:#2d6b85;transform:scaleX(1.0415);">Политический форум</span>
<span class="t" style="left:313.80px;top:177.00px;font-size:6.0px;color:#333;transform:scaleX(0.8972);">,</span>
<span class="t" style="left:317.00px;top:177.00px;font-size:6.0px;color:#2d6b85;transform:scaleX(0.9548);">ВОПРОС-ОТВЕТ</span>
<span class="t" style="left:362.80px;top:177.00px;font-size:6.0px;color:#333;transform:scaleX(0.8972);">,</span>
<span class="t" style="left:367.00px;top:177.00px;font-size:6.0px;color:#2d6b85;transform:scaleX(1.0132);">Коммунальный форум</span>
<span class="t" style="left:430.80px;top:177.00px;font-size:6.0px;color:#333;transform:scaleX(0.8972);">,</span>
<span class="t" style="left:435.00px;top:177.00px;font-size:6.0px;color:#2d6b85;transform:scaleX(1.0337);">Иностранные языки</span>
<span class="t" style="left:492.80px;top:177.00px;font-size:6.0px;color:#333;transform:scaleX(0.8972);">,</span>
<span class="t" style="left:497.00px;top:177.00px;font-size:6.0px;color:#2d6b85;transform:scaleX(1.0451);">Поздравления</span>
<span class="t" style="left:55.50px;top:200.00px;font-size:6.7px;color:#2a2a2a;transform:scaleX(1.0714);">Создать тему</span>
<span class="t" style="left:123.00px;top:200.00px;font-size:6.7px;color:#2a2a2a;transform:scaleX(1.0603);">В избранное</span>
<span class="t" style="left:187.00px;top:200.00px;font-size:6.7px;color:#2a2a2a;transform:scaleX(0.9444);">RSS</span>
<span class="t" style="left:723.50px;top:202.00px;font-size:6.6px;color:#222;transform:scaleX(1.0622);">Найти</span>
<span class="t" style="left:61.00px;top:218.00px;font-size:6.6px;color:#1d4f7c;transform:scaleX(1.0519);font-weight:bold;">Заголовок</span>
<span class="t" style="left:494.00px;top:218.00px;font-size:6.6px;color:#1d4f7c;transform:scaleX(1.0166);font-weight:bold;">Отправитель</span>
<span class="t" style="left:575.50px;top:218.00px;font-size:6.6px;color:#1d4f7c;transform:scaleX(0.9907);font-weight:bold;">Просмотров</span>
<span class="t" style="left:635.50px;top:218.00px;font-size:6.6px;color:#1d4f7c;transform:scaleX(0.9948);font-weight:bold;">Ответов</span>
<span class="t" style="left:683.50px;top:218.00px;font-size:6.6px;color:#1d4f7c;transform:scaleX(1.0177);font-weight:bold;">Отправлено</span>
<span class="t" style="left:61.00px;top:232.00px;font-size:6.75px;color:#2d6b85;transform:scaleX(1.0291);">Наше образование закладывает в детей основы старческого слабоумия</span>
<span class="t" style="left:302.50px;top:232.00px;font-size:6.2px;color:#262626;transform:scaleX(1.0234);">Страницы:</span>
<span class="t" style="left:337.00px;top:232.00px;font-size:6.2px;color:#2d6b85;transform:scaleX(0.7240);">1</span>
<span class="t" style="left:343.00px;top:232.00px;font-size:6.2px;color:#2d6b85;transform:scaleX(0.8688);">2</span>
<span class="t" style="left:349.50px;top:232.00px;font-size:6.2px;color:#2d6b85;transform:scaleX(0.9216);">все</span>
<span class="t" style="left:494.00px;top:232.00px;font-size:6.75px;color:#2d6b85;transform:scaleX(1.0644);">2040</span>
<span class="t" style="left:575.50px;top:232.00px;font-size:6.75px;color:#1e1e1e;transform:scaleX(1.0312);">1568</span>
<span class="t" style="left:635.50px;top:232.00px;font-size:6.75px;color:#1e1e1e;transform:scaleX(1.0644);">64</span>
<span class="t" style="left:645.50px;top:233.00px;font-size:5.5px;color:#e8452a;transform:scaleX(1.2622);">(2)</span>
<span class="t" style="left:683.50px;top:232.00px;font-size:6.75px;color:#1e1e1e;transform:scaleX(1.0663);">04.07.13 11:37</span>
<span class="t" style="left:61.00px;top:248.00px;font-size:6.75px;color:#2d6b85;transform:scaleX(0.9805);">изРАНеная</span>
<span class="t" style="left:103.00px;top:248.00px;font-size:6.2px;color:#262626;transform:scaleX(1.0234);">Страницы:</span>
<span class="t" style="left:137.50px;top:248.00px;font-size:6.2px;color:#2d6b85;transform:scaleX(0.7240);">1</span>
<span class="t" style="left:143.00px;top:248.00px;font-size:6.2px;color:#2d6b85;transform:scaleX(1.0136);">2</span>
<span class="t" style="left:149.50px;top:248.00px;font-size:6.2px;color:#2d6b85;transform:scaleX(0.9728);">все</span>
<span class="t" style="left:494.00px;top:248.00px;font-size:6.75px;color:#2d6b85;transform:scaleX(1.0277);">Градус</span>
<span class="t" style="left:575.50px;top:248.00px;font-size:6.75px;color:#1e1e1e;transform:scaleX(1.0312);">1092</span>
<span class="t" style="left:635.50px;top:248.00px;font-size:6.75px;color:#1e1e1e;transform:scaleX(1.0644);">49</span>
<span class="t" style="left:645.50px;top:249.00px;font-size:5.5px;color:#e8452a;transform:scaleX(1.2622);">(3)</span>
<span class="t" style="left:683.50px;top:248.00px;font-size:6.75px;color:#1e1e1e;transform:scaleX(1.0545);">04.07.13 10:51</span>
<span class="t" style="left:61.00px;top:263.00px;font-size:6.75px;color:#2d6b85;transform:scaleX(1.0281);">Я хочу жить в России....</span>
<span class="t" style="left:144.50px;top:263.00px;font-size:6.2px;color:#262626;transform:scaleX(1.0234);">Страницы:</span>
<span class="t" style="left:179.00px;top:263.00px;font-size:6.2px;color:#2d6b85;transform:scaleX(0.7240);">1</span>
<span class="t" style="left:185.00px;top:263.00px;font-size:6.2px;color:#2d6b85;transform:scaleX(0.8688);">2</span>
<span class="t" style="left:191.00px;top:263.00px;font-size:6.2px;color:#2d6b85;transform:scaleX(1.0240);">все</span>
<span class="t" style="left:494.00px;top:263.00px;font-size:6.75px;color:#2d6b85;transform:scaleX(1.0090);">Micha_Burmistrov</span>
<span class="t" style="left:575.50px;top:263.00px;font-size:6.75px;color:#1e1e1e;transform:scaleX(1.0312);">1052</span>
<span class="t" style="left:635.50px;top:263.00px;font-size:6.75px;color:#1e1e1e;transform:scaleX(1.0644);">48</span>
<span class="t" style="left:645.50px;top:264.00px;font-size:5.5px;color:#e8452a;transform:scaleX(1.2622);">(7)</span>
<span class="t" style="left:683.50px;top:263.00px;font-size:6.75px;color:#1e1e1e;transform:scaleX(1.0545);">04.07.13 10:47</span>
<span class="t" style="left:61.00px;top:279.00px;font-size:6.75px;color:#2d6b85;transform:scaleX(1.0506);">Наконец-то благотворительность в Новосибирске заработала!!!</span>
<span class="t" style="left:494.00px;top:279.00px;font-size:6.75px;color:#2d6b85;transform:scaleX(1.0045);">Daniello</span>
<span class="t" style="left:575.50px;top:279.00px;font-size:6.75px;color:#1e1e1e;transform:scaleX(0.9979);">88</span>
<span class="t" style="left:635.50px;top:279.00px;font-size:6.75px;color:#1e1e1e;transform:scaleX(1.1950);">2</span>
<span class="t" style="left:642.00px;top:280.00px;font-size:5.5px;color:#e8452a;transform:scaleX(1.2622);">(2)</span>
<span class="t" style="left:683.50px;top:279.00px;font-size:6.75px;color:#1e1e1e;transform:scaleX(1.0545);">04.07.13 09:25</span>
<span class="t" style="left:61.00px;top:295.00px;font-size:6.75px;color:#2d6b85;transform:scaleX(0.9975);">Comeback в Россию</span>
<span class="t" style="left:131.00px;top:295.00px;font-size:6.2px;color:#262626;transform:scaleX(1.0396);">Страницы:</span>
<span class="t" style="left:165.50px;top:295.00px;font-size:6.2px;color:#2d6b85;transform:scaleX(0.7240);">1</span>
<span class="t" style="left:171.50px;top:295.00px;font-size:6.2px;color:#2d6b85;transform:scaleX(0.8688);">2</span>
<span class="t" style="left:178.00px;top:295.00px;font-size:6.2px;color:#2d6b85;transform:scaleX(0.8688);">3</span>
<span class="t" style="left:184.00px;top:295.00px;font-size:6.2px;color:#2d6b85;transform:scaleX(1.0240);">все</span>
<span class="t" style="left:494.00px;top:295.00px;font-size:6.75px;color:#2d6b85;transform:scaleX(1.0230);">Katya_pingvic</span>
<span class="t" style="left:575.50px;top:295.00px;font-size:6.75px;color:#1e1e1e;transform:scaleX(1.0312);">2983</span>
<span class="t" style="left:635.50px;top:295.00px;font-size:6.75px;color:#1e1e1e;transform:scaleX(1.1096);">106</span>
<span class="t" style="left:650.00px;top:296.00px;font-size:5.5px;color:#e8452a;transform:scaleX(1.2622);">(3)</span>
<span class="t" style="left:683.50px;top:295.00px;font-size:6.75px;color:#1e1e1e;transform:scaleX(1.0545);">03.07.13 23:38</span>
<span class="t" style="left:61.00px;top:310.00px;font-size:6.75px;color:#2d6b85;transform:scaleX(1.0196);">Почему я практически не смотрю ТВ?</span>
<span class="t" style="left:494.00px;top:310.00px;font-size:6.75px;color:#2d6b85;transform:scaleX(1.0277);">Градус</span>
<span class="t" style="left:575.50px;top:310.00px;font-size:6.75px;color:#1e1e1e;transform:scaleX(1.0208);">613</span>
<span class="t" style="left:635.50px;top:310.00px;font-size:6.75px;color:#1e1e1e;transform:scaleX(1.0644);">18</span>
<span class="t" style="left:645.50px;top:311.00px;font-size:5.5px;color:#e8452a;transform:scaleX(1.2622);">(2)</span>
<span class="t" style="left:683.50px;top:310.00px;font-size:6.75px;color:#1e1e1e;transform:scaleX(1.0545);">03.07.13 21:51</span>
<span class="t" style="left:61.00px;top:326.00px;font-size:6.75px;color:#2d6b85;transform:scaleX(0.9904);">Почта России - накрывается медным тазом.....</span>
<span class="t" style="left:212.00px;top:326.00px;font-size:6.2px;color:#262626;transform:scaleX(1.0396);">Страницы:</span>
<span class="t" style="left:246.50px;top:326.00px;font-size:6.2px;color:#2d6b85;transform:scaleX(0.7240);">1</span>
<span class="t" style="left:253.00px;top:326.00px;font-size:6.2px;color:#2d6b85;transform:scaleX(0.8688);">2</span>
<span class="t" style="left:259.00px;top:326.00px;font-size:6.2px;color:#2d6b85;transform:scaleX(0.8688);">3</span>
<span class="t" style="left:265.50px;top:326.00px;font-size:6.2px;color:#2d6b85;transform:scaleX(0.8688);">4</span>
<span class="t" style="left:272.00px;top:326.00px;font-size:6.2px;color:#2d6b85;transform:scaleX(0.8688);">5</span>
<span class="t" style="left:278.00px;top:326.00px;font-size:6.2px;color:#2d6b85;transform:scaleX(0.8688);">6</span>
<span class="t" style="left:284.50px;top:326.00px;font-size:6.2px;color:#2d6b85;transform:scaleX(1.0240);">все</span>
<span class="t" style="left:494.00px;top:326.00px;font-size:6.75px;color:#2d6b85;transform:scaleX(1.0615);">elephant</span>
<span class="t" style="left:575.50px;top:326.00px;font-size:6.75px;color:#1e1e1e;transform:scaleX(1.0116);">15431</span>
<span class="t" style="left:635.50px;top:326.00px;font-size:6.75px;color:#1e1e1e;transform:scaleX(1.1096);">226</span>
<span class="t" style="left:650.00px;top:327.00px;font-size:5.5px;color:#e8452a;transform:scaleX(1.2622);">(1)</span>
<span class="t" style="left:683.50px;top:326.00px;font-size:6.75px;color:#1e1e1e;transform:scaleX(1.0545);">03.07.13 18:51</span>
<span class="t" style="left:61.00px;top:341.00px;font-size:6.75px;color:#2d6b85;transform:scaleX(0.9837);">НЛО или ?</span>
<span class="t" style="left:494.00px;top:341.00px;font-size:6.75px;color:#2d6b85;transform:scaleX(1.0095);">mixail54</span>
<span class="t" style="left:575.50px;top:341.00px;font-size:6.75px;color:#1e1e1e;transform:scaleX(1.0208);">928</span>
<span class="t" style="left:635.50px;top:341.00px;font-size:6.75px;color:#1e1e1e;transform:scaleX(1.0644);">17</span>
<span class="t" style="left:683.50px;top:341.00px;font-size:6.75px;color:#1e1e1e;transform:scaleX(1.0545);">02.07.13 21:56</span>
<span class="t" style="left:61.00px;top:357.00px;font-size:6.75px;color:#2d6b85;transform:scaleX(1.0309);">Натуралы Петербурга</span>
<span class="t" style="left:139.50px;top:357.00px;font-size:6.2px;color:#262626;transform:scaleX(1.0396);">Страницы:</span>
<span class="t" style="left:174.00px;top:357.00px;font-size:6.2px;color:#2d6b85;transform:scaleX(0.7240);">1</span>
<span class="t" style="left:180.50px;top:357.00px;font-size:6.2px;color:#2d6b85;transform:scaleX(0.8688);">2</span>
<span class="t" style="left:186.50px;top:357.00px;font-size:6.2px;color:#2d6b85;transform:scaleX(0.8701);">...</span>
<span class="t" style="left:195.50px;top:357.00px;font-size:6.2px;color:#2d6b85;transform:scaleX(0.9433);">10</span>
<span class="t" style="left:205.50px;top:357.00px;font-size:6.2px;color:#2d6b85;transform:scaleX(1.0097);">11</span>
<span class="t" style="left:215.50px;top:357.00px;font-size:6.2px;color:#2d6b85;transform:scaleX(1.0159);">12</span>
<span class="t" style="left:226.00px;top:357.00px;font-size:6.2px;color:#2d6b85;transform:scaleX(0.9433);">13</span>
<span class="t" style="left:235.50px;top:357.00px;font-size:6.2px;color:#2d6b85;transform:scaleX(1.0159);">14</span>
<span class="t" style="left:245.50px;top:357.00px;font-size:6.2px;color:#2d6b85;transform:scaleX(0.9433);">15</span>
<span class="t" style="left:494.00px;top:357.00px;font-size:6.75px;color:#2d6b85;transform:scaleX(1.0245);">eddy</span>
<span class="t" style="left:575.50px;top:357.00px;font-size:6.75px;color:#1e1e1e;transform:scaleX(1.0116);">30398</span>
<span class="t" style="left:635.50px;top:357.00px;font-size:6.75px;color:#1e1e1e;transform:scaleX(1.1096);">566</span>
<span class="t" style="left:683.50px;top:357.00px;font-size:6.75px;color:#1e1e1e;transform:scaleX(1.0545);">02.07.13 20:33</span>
<span class="t" style="left:61.00px;top:372.00px;font-size:6.75px;color:#2d6b85;transform:scaleX(1.0399);">Почему у врачей плохой почерк?</span>
<span class="t" style="left:494.00px;top:372.00px;font-size:6.75px;color:#2d6b85;transform:scaleX(1.0644);">2040</span>
<span class="t" style="left:575.50px;top:372.00px;font-size:6.75px;color:#1e1e1e;transform:scaleX(1.0208);">483</span>
<span class="t" style="left:635.50px;top:372.00px;font-size:6.75px;color:#1e1e1e;transform:scaleX(1.0644);">13</span>
<span class="t" style="left:683.50px;top:372.00px;font-size:6.75px;color:#1e1e1e;transform:scaleX(1.0545);">02.07.13 00:44</span>
<span class="t" style="left:61.00px;top:388.00px;font-size:6.75px;color:#2d6b85;transform:scaleX(1.0261);">Обсуждение мер по защите религиозных чувств в Госдуме России</span>
<span class="t" style="left:282.50px;top:388.00px;font-size:6.2px;color:#262626;transform:scaleX(1.0234);">Страницы:</span>
<span class="t" style="left:317.00px;top:388.00px;font-size:6.2px;color:#2d6b85;transform:scaleX(0.7240);">1</span>
<span class="t" style="left:323.00px;top:388.00px;font-size:6.2px;color:#2d6b85;transform:scaleX(0.8688);">2</span>
<span class="t" style="left:329.00px;top:388.00px;font-size:6.2px;color:#2d6b85;transform:scaleX(0.9668);">...</span>
<span class="t" style="left:338.00px;top:388.00px;font-size:6.2px;color:#2d6b85;transform:scaleX(0.9433);">19</span>
<span class="t" style="left:348.00px;top:388.00px;font-size:6.2px;color:#2d6b85;transform:scaleX(1.0159);">20</span>
<span class="t" style="left:358.00px;top:388.00px;font-size:6.2px;color:#2d6b85;transform:scaleX(1.0159);">21</span>
<span class="t" style="left:368.00px;top:388.00px;font-size:6.2px;color:#2d6b85;transform:scaleX(1.0159);">22</span>
<span class="t" style="left:378.00px;top:388.00px;font-size:6.2px;color:#2d6b85;transform:scaleX(1.0159);">23</span>
<span class="t" style="left:388.00px;top:388.00px;font-size:6.2px;color:#2d6b85;transform:scaleX(1.0159);">24</span>
<span class="t" style="left:494.00px;top:388.00px;font-size:6.75px;color:#2d6b85;transform:scaleX(1.0936);">ahr154</span>
<span class="t" style="left:575.50px;top:388.00px;font-size:6.75px;color:#1e1e1e;transform:scaleX(1.0116);">27096</span>
<span class="t" style="left:635.50px;top:388.00px;font-size:6.75px;color:#1e1e1e;transform:scaleX(1.1096);">921</span>
<span class="t" style="left:683.50px;top:388.00px;font-size:6.75px;color:#1e1e1e;transform:scaleX(1.0545);">30.06.13 13:02</span>
<span class="t" style="left:61.00px;top:404.00px;font-size:6.75px;color:#2d6b85;transform:scaleX(1.0411);">Русский и английский языки как стратегии</span>
<span class="t" style="left:206.00px;top:404.00px;font-size:6.2px;color:#262626;transform:scaleX(1.0071);">Страницы:</span>
<span class="t" style="left:240.00px;top:404.00px;font-size:6.2px;color:#2d6b85;transform:scaleX(0.7240);">1</span>
<span class="t" style="left:246.50px;top:404.00px;font-size:6.2px;color:#2d6b85;transform:scaleX(0.8688);">2</span>
<span class="t" style="left:253.00px;top:404.00px;font-size:6.2px;color:#2d6b85;transform:scaleX(0.8688);">3</span>
<span class="t" style="left:259.00px;top:404.00px;font-size:6.2px;color:#2d6b85;transform:scaleX(0.8688);">4</span>
<span class="t" style="left:265.50px;top:404.00px;font-size:6.2px;color:#2d6b85;transform:scaleX(0.8688);">5</span>
<span class="t" style="left:272.00px;top:404.00px;font-size:6.2px;color:#2d6b85;transform:scaleX(0.8688);">6</span>
<span class="t" style="left:278.50px;top:404.00px;font-size:6.2px;color:#2d6b85;transform:scaleX(0.9728);">все</span>
<span class="t" style="left:494.00px;top:404.00px;font-size:6.75px;color:#2d6b85;transform:scaleX(1.0396);">Spirit</span>
<span class="t" style="left:575.50px;top:404.00px;font-size:6.75px;color:#1e1e1e;transform:scaleX(1.0312);">8954</span>
<span class="t" style="left:635.50px;top:404.00px;font-size:6.75px;color:#1e1e1e;transform:scaleX(1.1096);">235</span>
<span class="t" style="left:683.50px;top:404.00px;font-size:6.75px;color:#1e1e1e;transform:scaleX(1.0545);">24.06.13 23:27</span>
<span class="t" style="left:755.00px;top:398.00px;font-size:6.4px;color:#2d6b85;transform:scaleX(1.1963);border-bottom:1px dotted #6a9ab0;">Наверх</span>
</div>
</body></html>
